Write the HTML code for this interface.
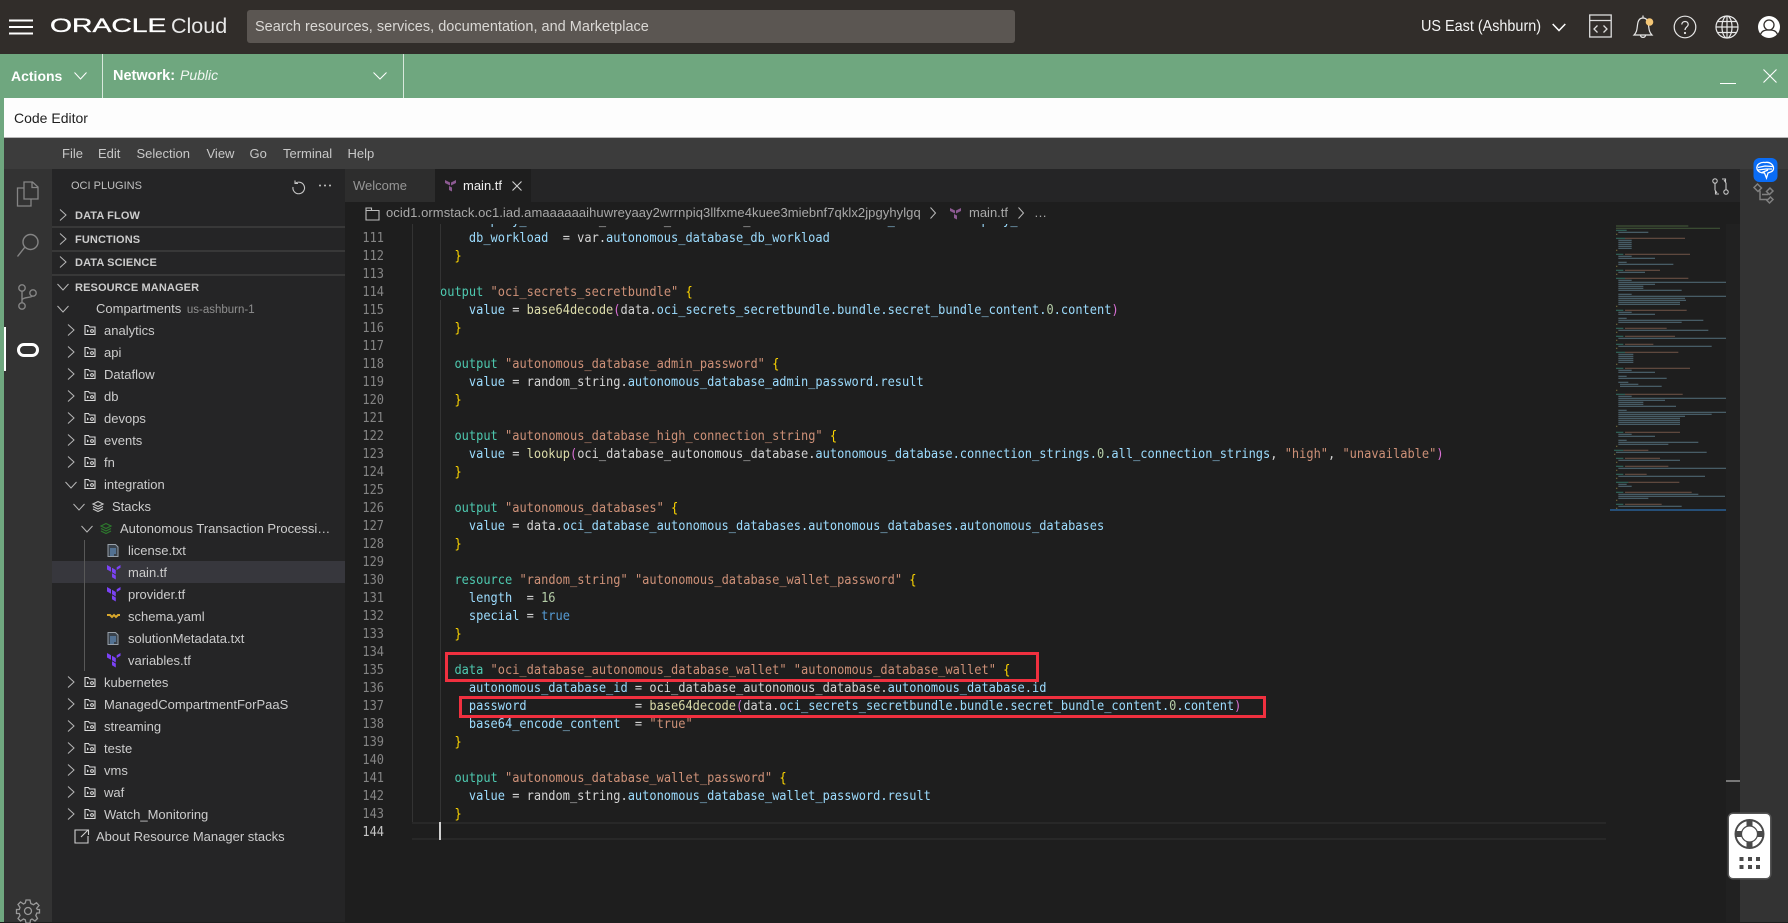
<!DOCTYPE html>
<html><head><meta charset="utf-8"><title>Code Editor</title>
<style>
*{box-sizing:border-box}
html,body{margin:0;padding:0;width:1788px;height:922px;overflow:hidden;background:#1e1e1e;font-family:"Liberation Sans",sans-serif}
.a{position:absolute;white-space:nowrap}
svg{position:absolute;overflow:visible}
.row{position:absolute;height:22px;line-height:22px;font-size:13px;color:#cccccc;white-space:nowrap;margin-top:1px}
.sec{position:absolute;left:75px;font-size:11px;font-weight:bold;color:#cccccc;line-height:14px;letter-spacing:.12px;margin-top:1px}
.sep{position:absolute;left:52px;width:293px;height:2px;background:#383838}
.mn{position:absolute;top:146px;font-size:13px;line-height:15px;color:#c8c8c8}
pre.a{margin:0;font-family:"DejaVu Sans Mono","Liberation Mono",monospace;font-size:13.5px;line-height:18px;white-space:pre}
.k{color:#4ec9b0}.s{color:#ce9178}.b{color:#ffd700}.p{color:#9cdcfe}.w{color:#d4d4d4}.f{color:#dcdcaa}.m{color:#da70d6}.n{color:#b5cea8}.t{color:#569cd6}
</style></head><body>
<svg width="0" height="0" style="position:absolute"><defs>
<g id="ch"><path d="M-3-5.5 3 0-3 5.5" fill="none" stroke="#b8b8b8" stroke-width="1"/></g>
<g id="cd"><path d="M-5.5-3 0 3 5.5-3" fill="none" stroke="#b8b8b8" stroke-width="1"/></g>
<g id="fo"><path d="M.5 1.5H4L5 3H10.5V10.5H.5Z" fill="none" stroke="#dcdcdc" stroke-width="1.1"/><path d="M2.5 5.5 4.5 7 2.5 8.5Z" fill="#dcdcdc"/><circle cx="7.5" cy="7" r="1.4" fill="none" stroke="#dcdcdc"/></g>
<g id="tf"><path d="M0 0 4 2.3V6.8L0 4.5ZM5 2.8 8.8 5V9.5L5 7.3ZM9.7 5 13.5 2.8V0L9.7 2.2V6.5ZM5 8.3 8.8 10.5V14.5L5 12.3Z" fill="#7b42f6"/></g>
<g id="tx"><path d="M1 .5H8.5L11 3V12.5H1Z" fill="#39424c" stroke="#98a0a8"/><path d="M3 5H9M3 7H9M3 9H9M3 11H7" stroke="#6aa0d8"/></g>
<g id="st"><path d="M0 3 5 .5 10 3 5 5.5ZM0 5.5 5 8 10 5.5M0 8 5 10.5 10 8" fill="none" stroke="currentColor" stroke-width="1.2"/></g>
</defs></svg>

<!-- top bar -->
<div class="a" style="left:0;top:0;width:1788px;height:54px;background:#312d2a"></div>
<svg style="left:9px;top:19px" width="24" height="16"><path d="M0 1.5H24M0 8H24M0 14.5H24" stroke="#fff" stroke-width="2"/></svg>
<div class="a" style="left:50px;top:16px;font-size:19px;line-height:22px;color:#fff;transform:scaleX(1.49);transform-origin:0 0;-webkit-text-stroke:.35px #fff">ORACLE</div>
<div class="a" style="left:171px;top:14px;font-size:21.5px;line-height:24px;color:#e8e8e8">Cloud</div>
<div class="a" style="left:247px;top:10px;width:768px;height:33px;background:#5b5652;border-radius:3px"></div>
<div class="a" style="left:255px;top:18px;font-size:14.5px;line-height:18px;color:#dad8d5;letter-spacing:.01px">Search resources, services, documentation, and Marketplace</div>
<div class="a" style="left:1421px;top:17px;font-size:16px;line-height:20px;color:#f4f4f4;transform:scaleX(.9);transform-origin:0 0">US East (Ashburn)</div>
<svg style="left:1552px;top:23px" width="14" height="9"><path d="M.7 1 7 7.5 13.3 1" fill="none" stroke="#fff" stroke-width="1.5"/></svg>
<svg style="left:1589px;top:14px" width="23" height="24" fill="none" stroke="#ddd" stroke-width="1.3"><rect x=".7" y="1" width="21.5" height="22"/><path d="M.7 6.5H22M8.5 11.5 5 15 8.5 18.500M14.500 11.500 18 15 14.500 18.500"/></svg>
<svg style="left:1632px;top:14px" width="24" height="25" fill="none" stroke="#e8e8e8" stroke-width="1.2"><path d="M2 21C5 18 5 15 5.500 11 6 6 8 4 11 4S16 6 16.500 11C17 15 17 18 20 21ZM11 4V1.500M8.500 21.500C9 24 13 24 13.500 21.500"/><circle cx="17.500" cy="8" r="3.800" fill="#f4c676" stroke="none"/></svg>
<svg style="left:1673px;top:15px" width="24" height="24" fill="none" stroke="#e8e8e8" stroke-width="1.2"><circle cx="12" cy="12" r="10.800"/><path d="M8.800 9.500C9 5.500 15.200 5.500 15.200 9.500 15.200 12 12 12 12 15"/><circle cx="12" cy="18" r=".5"/></svg>
<svg style="left:1715px;top:15px" width="24" height="24" fill="none" stroke="#e8e8e8" stroke-width="1.2"><circle cx="12" cy="12" r="11"/><ellipse cx="12" cy="12" rx="5" ry="11"/><path d="M12 1V23M1 12H23M2.500 6.500H21.500M2.500 17.500H21.500"/></svg>
<svg style="left:1757px;top:15px" width="24" height="24"><circle cx="12" cy="12" r="11" fill="#fff"/><circle cx="12" cy="10" r="5" fill="none" stroke="#312d2a" stroke-width="1.300"/><path d="M3.500 19.500C5 15.500 8 15 12 15S19 15.500 20.500 19.500" fill="none" stroke="#312d2a" stroke-width="1.300"/></svg>

<!-- green bar -->
<div class="a" style="left:0;top:54px;width:1788px;height:44px;background:#6fa77f"></div>
<div class="a" style="left:0;top:54px;width:3.500px;height:868px;background:#6fa77f"></div>
<div class="a" style="left:11px;top:67px;font-size:14px;line-height:18px;font-weight:bold;color:#fff">Actions</div>
<svg style="left:74px;top:72px" width="13" height="8"><path d="M.5.500 6.500 7 12.500.500" fill="none" stroke="#fff" stroke-width="1"/></svg>
<div class="a" style="left:102px;top:54px;width:1px;height:44px;background:#d8e8dc"></div>
<div class="a" style="left:113px;top:67px;font-size:14.500px;line-height:18px;font-weight:bold;color:#fff">Network:</div>
<div class="a" style="left:180px;top:66px;font-size:14px;line-height:18px;font-style:italic;color:#f0f6f1">Public</div>
<svg style="left:373px;top:72px" width="14" height="8"><path d="M.5.500 7 7 13.500.500" fill="none" stroke="#fff" stroke-width="1"/></svg>
<div class="a" style="left:403px;top:54px;width:1px;height:44px;background:#d8e8dc"></div>
<div class="a" style="left:1720px;top:83px;width:16px;height:1px;background:#fff"></div>
<svg style="left:1763px;top:69px" width="14" height="14"><path d="M.5.500 13.500 13.500M13.500.500 .5 13.500" stroke="#fff" stroke-width="1.100"/></svg>

<!-- white bar -->
<div class="a" style="left:3.500px;top:98px;width:1785px;height:40px;background:#fdfdfd;border-bottom:1px solid #b8b8b8"></div>
<div class="a" style="left:14px;top:109px;font-size:14px;line-height:18px;color:#1f1f1f">Code Editor</div>

<!-- menu -->
<div class="a" style="left:3.500px;top:138px;width:1785px;height:31px;background:#3c3c3c"></div>
<div class="mn" style="left:62px">File</div><div class="mn" style="left:98px">Edit</div><div class="mn" style="left:136.500px">Selection</div><div class="mn" style="left:206.500px">View</div><div class="mn" style="left:249.500px">Go</div><div class="mn" style="left:283px">Terminal</div><div class="mn" style="left:347.500px">Help</div>

<!-- activity bar -->
<div class="a" style="left:3.500px;top:169px;width:48.500px;height:753px;background:#333333"></div>
<svg style="left:16px;top:181px" width="24" height="27" fill="none" stroke="#858585" stroke-width="1.300"><path d="M8 1H16.500L22 6V18H8ZM16 1V6.500H22M8 7H1.500V25H15V18"/></svg>
<svg style="left:16px;top:233px" width="25" height="25" fill="none" stroke="#858585" stroke-width="1.400"><circle cx="14.500" cy="9" r="7.500"/><path d="M9 14 1.500 23.500"/></svg>
<svg style="left:17px;top:284px" width="21" height="26" fill="none" stroke="#858585" stroke-width="1.400"><circle cx="5" cy="4" r="3.200"/><circle cx="5" cy="22" r="3.200"/><circle cx="16" cy="9" r="3.200"/><path d="M5 7.500V18.500M5 16C6 13 14 14 15.500 12"/></svg>
<div class="a" style="left:3.500px;top:327px;width:2.500px;height:44px;background:#fff"></div>
<div class="a" style="left:17px;top:343px;width:22px;height:14px;border:3px solid #fff;border-radius:7px"></div>
<svg style="left:16px;top:899px" width="24" height="24" fill="none" stroke="#999" stroke-width="1.300"><circle cx="12" cy="12" r="3.500"/><path d="M10 1H14L14.800 4.500 17.500 5.700 20.500 3.700 23 6.500 20.600 9.300 21.400 10.500H23.500V14H20.800L19.800 16.500 21.500 19.500 19 22 16 20 14.500 21 14 24H10L9.300 20.800 7.500 20 4.500 22 2 19.500 4 16.500 3.300 14.500H.5V10.500H3.300L4 8.500 2 5.500 4.500 3 7.500 5 9.300 4Z"/></svg>

<!-- sidebar -->
<div class="a" style="left:52px;top:169px;width:293px;height:753px;background:#252526"></div>
<div class="a" style="left:71px;top:179px;font-size:11px;line-height:14px;color:#c0c0c0">OCI PLUGINS</div>
<svg style="left:292px;top:179px" width="13" height="14" fill="none" stroke="#c5c5c5" stroke-width="1.100"><path d="M3 1.500V4.500H6M3 4.500A5.800 5.800 0 1 1 1 8"/></svg>
<svg style="left:318px;top:184px" width="14" height="3" fill="#c5c5c5"><circle cx="2" cy="1.500" r="1"/><circle cx="7" cy="1.500" r="1"/><circle cx="12" cy="1.500" r="1"/></svg>

<div class="sep" style="top:226px"></div><div class="sep" style="top:250px"></div><div class="sep" style="top:274px"></div>
<div class="sec" style="top:208px">DATA FLOW</div>
<div class="sec" style="top:232px">FUNCTIONS</div>
<div class="sec" style="top:255px">DATA SCIENCE</div>
<div class="sec" style="top:280px">RESOURCE MANAGER</div>
<div class="a" style="left:52px;top:561px;width:293px;height:22px;background:#37373d"></div>
<div class="a" style="left:84px;top:540px;width:1px;height:131px;background:#585858"></div>

<svg style="left:0;top:0" width="346" height="922">
<use href="#ch" x="63" y="215"/><use href="#ch" x="63" y="239"/><use href="#ch" x="63" y="262"/><use href="#cd" x="63" y="287"/>
<use href="#cd" x="63" y="309"/>
<use href="#ch" x="71" y="330"/><use href="#ch" x="71" y="352"/><use href="#ch" x="71" y="374"/><use href="#ch" x="71" y="396"/><use href="#ch" x="71" y="418"/><use href="#ch" x="71" y="440"/><use href="#ch" x="71" y="462"/><use href="#cd" x="71" y="485"/>
<use href="#cd" x="79" y="507"/><use href="#cd" x="87" y="529"/>
<use href="#ch" x="71" y="682"/><use href="#ch" x="71" y="704"/><use href="#ch" x="71" y="726"/><use href="#ch" x="71" y="748"/><use href="#ch" x="71" y="770"/><use href="#ch" x="71" y="792"/><use href="#ch" x="71" y="814"/>
<use href="#fo" x="84.500" y="324"/><use href="#fo" x="84.500" y="346"/><use href="#fo" x="84.500" y="368"/><use href="#fo" x="84.500" y="390"/><use href="#fo" x="84.500" y="412"/><use href="#fo" x="84.500" y="434"/><use href="#fo" x="84.500" y="456"/><use href="#fo" x="84.500" y="478"/>
<use href="#fo" x="84.500" y="676"/><use href="#fo" x="84.500" y="698"/><use href="#fo" x="84.500" y="720"/><use href="#fo" x="84.500" y="742"/><use href="#fo" x="84.500" y="764"/><use href="#fo" x="84.500" y="786"/><use href="#fo" x="84.500" y="808"/>
<use href="#st" x="93" y="501" style="color:#c8c8c8"/><use href="#st" x="101" y="523" style="color:#2d7a2d"/>
<use href="#tx" x="107" y="544"/><use href="#tx" x="107" y="632"/>
<use href="#tf" x="107" y="565"/><use href="#tf" x="107" y="587"/><use href="#tf" x="107" y="653"/>
<path d="M107 615H110L112 617 114 615 116 617 118 615H120" fill="none" stroke="#d8a72c" stroke-width="2"/>
<path d="M88 830H75V843H88V836M81 837 88 830M83 830H88.500V835" fill="none" stroke="#d0d0d0" stroke-width="1.100"/>
</svg>

<div class="row" style="left:96px;top:297px">Compartments <span style="font-size:11.500px;color:#8f8f8f;margin-left:2px">us-ashburn-1</span></div>
<div class="row" style="left:104px;top:319px">analytics</div>
<div class="row" style="left:104px;top:341px">api</div>
<div class="row" style="left:104px;top:363px">Dataflow</div>
<div class="row" style="left:104px;top:385px">db</div>
<div class="row" style="left:104px;top:407px">devops</div>
<div class="row" style="left:104px;top:429px">events</div>
<div class="row" style="left:104px;top:451px">fn</div>
<div class="row" style="left:104px;top:473px">integration</div>
<div class="row" style="left:112px;top:495px">Stacks</div>
<div class="row" style="left:120px;top:517px">Autonomous Transaction Processi…</div>
<div class="row" style="left:128px;top:539px">license.txt</div>
<div class="row" style="left:128px;top:561px">main.tf</div>
<div class="row" style="left:128px;top:583px">provider.tf</div>
<div class="row" style="left:128px;top:605px">schema.yaml</div>
<div class="row" style="left:128px;top:627px">solutionMetadata.txt</div>
<div class="row" style="left:128px;top:649px">variables.tf</div>
<div class="row" style="left:104px;top:671px">kubernetes</div>
<div class="row" style="left:104px;top:693px">ManagedCompartmentForPaaS</div>
<div class="row" style="left:104px;top:715px">streaming</div>
<div class="row" style="left:104px;top:737px">teste</div>
<div class="row" style="left:104px;top:759px">vms</div>
<div class="row" style="left:104px;top:781px">waf</div>
<div class="row" style="left:104px;top:803px">Watch_Monitoring</div>
<div class="row" style="left:96px;top:825px">About Resource Manager stacks</div>

<!-- editor: code -->
<div class="a" style="left:345px;top:202px;width:1395px;height:720px;background:#1e1e1e"></div>
<div class="a" style="left:412px;top:822px;width:1194px;height:18px;border-top:2px solid #282828;border-bottom:2px solid #282828"></div>
<div class="a" style="left:411.500px;top:224px;width:1px;height:598px;background:#333"></div>
<div class="a" style="left:439.500px;top:224px;width:1px;height:66px;background:#333"></div>
<div class="a" style="left:439.500px;top:300px;width:1px;height:522px;background:#333"></div>
<div class="a" style="left:439px;top:822px;width:1.500px;height:18px;background:#d0d0d0"></div>

<div class="a" style="left:345px;top:224px;width:1265px;height:698px;overflow:hidden">
<pre class="a" style="left:0;top:-13px;width:39px;text-align:right;color:#858585;transform:scaleX(.8874);transform-origin:100% 0">110
111
112
113
114
115
116
117
118
119
120
121
122
123
124
125
126
127
128
129
130
131
132
133
134
135
136
137
138
139
140
141
142
143
<span style="color:#c6c6c6">144</span></pre>
<pre class="a" style="left:94.700px;top:-13px;transform:scaleX(.8882);transform-origin:0 0;color:#d4d4d4">    <span class="p">display_name</span> = <span class="w">oci_database_autonomous_database</span>.<span class="p">autonomous_database.display_name</span>
    <span class="p">db_workload</span>  = var.<span class="p">autonomous_database_db_workload</span>
  <span class="b">}</span>

<span class="k">output</span> <span class="s">"oci_secrets_secretbundle"</span> <span class="b">{</span>
    <span class="p">value</span> = <span class="f">base64decode</span><span class="m">(</span>data.<span class="p">oci_secrets_secretbundle.bundle.secret_bundle_content.</span><span class="n">0</span><span class="p">.content</span><span class="m">)</span>
  <span class="b">}</span>

  <span class="k">output</span> <span class="s">"autonomous_database_admin_password"</span> <span class="b">{</span>
    <span class="p">value</span> = random_string.<span class="p">autonomous_database_admin_password.result</span>
  <span class="b">}</span>

  <span class="k">output</span> <span class="s">"autonomous_database_high_connection_string"</span> <span class="b">{</span>
    <span class="p">value</span> = <span class="f">lookup</span><span class="m">(</span>oci_database_autonomous_database.<span class="p">autonomous_database.connection_strings.</span><span class="n">0</span><span class="p">.all_connection_strings</span>, <span class="s">"high"</span>, <span class="s">"unavailable"</span><span class="m">)</span>
  <span class="b">}</span>

  <span class="k">output</span> <span class="s">"autonomous_databases"</span> <span class="b">{</span>
    <span class="p">value</span> = data.<span class="p">oci_database_autonomous_databases.autonomous_databases.autonomous_databases</span>
  <span class="b">}</span>

  <span class="k">resource</span> <span class="s">"random_string"</span> <span class="s">"autonomous_database_wallet_password"</span> <span class="b">{</span>
    <span class="p">length</span>  = <span class="n">16</span>
    <span class="p">special</span> = <span class="t">true</span>
  <span class="b">}</span>

  <span class="k">data</span> <span class="s">"oci_database_autonomous_database_wallet"</span> <span class="s">"autonomous_database_wallet"</span> <span class="b">{</span>
    <span class="p">autonomous_database_id</span> = oci_database_autonomous_database.<span class="p">autonomous_database.id</span>
    <span class="p">password</span>               = <span class="f">base64decode</span><span class="m">(</span>data.<span class="p">oci_secrets_secretbundle.bundle.secret_bundle_content.</span><span class="n">0</span><span class="p">.content</span><span class="m">)</span>
    <span class="p">base64_encode_content</span>  = <span class="s">"true"</span>
  <span class="b">}</span>

  <span class="k">output</span> <span class="s">"autonomous_database_wallet_password"</span> <span class="b">{</span>
    <span class="p">value</span> = random_string.<span class="p">autonomous_database_wallet_password.result</span>
  <span class="b">}</span>
</pre>
</div>

<!-- red boxes -->
<div class="a" style="left:445px;top:652px;width:594px;height:30px;border:3px solid #f0303f"></div>
<div class="a" style="left:459px;top:696px;width:807px;height:22px;border:3px solid #f0303f"></div>

<!-- tabs -->
<div class="a" style="left:345px;top:169px;width:1395px;height:33px;background:#252526"></div>
<div class="a" style="left:345px;top:169px;width:90px;height:33px;background:#2d2d2d"></div>
<div class="a" style="left:353px;top:178px;font-size:13px;line-height:16px;color:#969696">Welcome</div>
<div class="a" style="left:435px;top:169px;width:96px;height:33px;background:#1e1e1e"></div>
<svg style="left:445px;top:180px" width="12" height="12"><path d="M0 0 5 2.500V5.500L0 3ZM6 2.500 11 0V3L6 5.500ZM4 6 7 7.500V11.500L4 10Z" fill="#8c5a92"/></svg>
<div class="a" style="left:463px;top:178px;font-size:13px;line-height:16px;color:#f0f0f0">main.tf</div>
<svg style="left:512px;top:181px" width="10" height="10"><path d="M.5.500 9.500 9.500M9.500.500 .5 9.500" stroke="#d0d0d0" stroke-width="1.100"/></svg>
<svg style="left:1712px;top:178px" width="17" height="17" fill="none" stroke="#c5c5c5" stroke-width="1.100"><circle cx="3" cy="3" r="2.200"/><circle cx="14" cy="14" r="2.200"/><path d="M3 5.200V12L5 15M14 11.800V5L12 2M10 1H13.500V4M7 16H3.500V13"/></svg>

<!-- breadcrumb -->
<div class="a" style="left:345px;top:202px;width:1395px;height:22px;background:#1e1e1e"></div>
<svg style="left:365px;top:207px" width="15" height="14" fill="none" stroke="#bdbdbd" stroke-width="1.100"><path d="M1 1H6.500V3.500H14V13H1ZM1 3.500H6.500"/></svg>
<div class="a" style="left:386px;top:205px;font-size:13px;line-height:16px;color:#a9a9a9;letter-spacing:.07px">ocid1.ormstack.oc1.iad.amaaaaaaihuwreyaay2wrrnpiq3llfxme4kuee3miebnf7qklx2jpgyhylgq</div>
<svg style="left:930px;top:207px" width="6" height="12"><path d="M.5.500 5.500 6 .5 11.500" fill="none" stroke="#bbb" stroke-width="1"/></svg>
<svg style="left:950px;top:208px" width="12" height="12"><path d="M0 0 5 2.500V5.500L0 3ZM6 2.500 11 0V3L6 5.500ZM4 6 7 7.500V11.500L4 10Z" fill="#8c5a92"/></svg>
<div class="a" style="left:969px;top:205px;font-size:13px;line-height:16px;color:#a9a9a9">main.tf</div>
<svg style="left:1018px;top:207px" width="6" height="12"><path d="M.5.500 5.500 6 .5 11.500" fill="none" stroke="#bbb" stroke-width="1"/></svg>
<div class="a" style="left:1034px;top:205px;font-size:13px;line-height:16px;color:#a9a9a9">…</div>

<!-- minimap -->
<div class="a" style="left:1726px;top:224px;width:14px;height:698px;background:#212121"></div>
<svg style="left:1600px;top:210px;filter:blur(.35px)" width="188" height="330" viewBox="0 0 564 990" fill="none" stroke-width="3.500" opacity=".42">
<path stroke="#6a9955" d="M48 48H265M48 55H360"/>
<path stroke="#ce9178" d="M75 85H255M75 133H270M75 181H180M75 205H265M75 301H260M75 355H200M75 379H225M75 403H160M75 427H235M75 475H270M75 553H248M75 667H240M70 721H145M75 745H180M75 769H205M75 793H140M85 817H238M75 847H275M75 883H185"/>
<path stroke="#4ec9b0" d="M48 61H80M48 85H75M48 133H70M48 181H70M48 205H75M48 301H70M48 355H70M48 379H70M48 403H70M48 427H75M48 475H70M48 553H75M48 667H70M42 721H70M48 745H70M48 769H70M48 793H70M48 817H85M48 847H70M48 883H70"/>
<path stroke="#8fc8e4" d="M55 67H145M55 91H95M55 97H95M55 103H95M55 109H95M55 115H95M55 139H95M55 145H165M55 157H80M55 163H220M55 187H135M55 211H95M55 217H378M55 223H165M55 229H130M55 235H130M55 241H245M55 253H95M55 259H378M55 265H255M55 271H258M55 277H240M55 283H240M55 307H95M55 313H165M55 325H80M55 331H310M55 337H245M55 361H325M55 385H378M55 409H335M55 433H100M55 439H100M55 445H100M55 451H100M55 457H100M55 481H95M55 487H165M55 499H80M55 505H200M55 517H85M60 523H115M60 529H185M55 559H95M55 565H378M55 571H195M55 577H130M55 583H130M55 589H228M55 601H80M55 607H378M55 613H335M55 619H255M55 625H240M55 631H240M55 637H240M55 643H240M55 673H95M55 679H165M55 691H80M55 697H295M55 703H205M48 727H320M55 751H240M55 775H378M55 799H315M55 823H80M55 829H95M55 853H295M55 859H375M55 865H145M55 889H245"/>
<path stroke="#e8d060" d="M48 73H52M48 121H52M48 169H52M48 193H52M48 289H52M48 343H52M48 367H52M48 391H52M48 415H52M48 463H52M48 541H52M48 649H52M48 709H52M42 733H46M48 757H52M48 781H52M48 805H52M48 835H52M48 871H52M48 895H52"/>
</svg>
<div class="a" style="left:1610px;top:509px;width:116px;height:2px;background:#264f78"></div>
<div class="a" style="left:1726px;top:779.500px;width:14px;height:2px;background:#777"></div>

<!-- right bar -->
<div class="a" style="left:1740px;top:169px;width:48px;height:753px;background:#333333"></div>
<svg style="left:1753px;top:158px" width="24" height="24"><rect width="24" height="24" rx="6" fill="#0a6cf5" x=".5"/><path d="M4 11C3 6 8 4 12 4.500 17 3.500 21 7 20.500 11 20 14 17 14 15 15L13.500 20 11.500 15C8 15 5 14 4 11ZM5 9.500 12 8 20 8.500M5 12 13 11 19 11M9 14.500 15 12" fill="none" stroke="#fff" stroke-width="1.300"/></svg>
<svg style="left:1753px;top:183px" width="24" height="22" fill="none" stroke="#808080" stroke-width="1.500"><path d="M4.500 1 1 4.500 5 8.500 8.500 5ZM17 5 13.500 8.500 16.500 11.500 20 8ZM17.500 14 14 17.500 16.500 20 20 16.500ZM7 7.500V16.500H15M9 11.500H15.500"/></svg>

<!-- help widget -->
<div class="a" style="left:1729px;top:814px;width:41px;height:64px;background:#fff;border-radius:4px;box-shadow:0 0 0 1.500px #555"></div>
<svg style="left:1728px;top:813px" width="43" height="65">
<circle cx="21.500" cy="21" r="15" fill="#4a4a4a"/>
<circle cx="21.500" cy="21" r="10.500" fill="none" stroke="#fff" stroke-width="5"/>
<path d="M21.500 7V13.500M21.500 28.500V35M7.500 21H14M29 21H35.500" stroke="#4a4a4a" stroke-width="6"/>
<circle cx="21.500" cy="21" r="8" fill="#fff" stroke="#4a4a4a" stroke-width="1.200"/>
<g fill="#4a4a4a"><rect x="11.500" y="44" width="4" height="4"/><rect x="20" y="44" width="4" height="4"/><rect x="28" y="44" width="4" height="4"/><rect x="11.500" y="52" width="4" height="4"/><rect x="20" y="52" width="4" height="4"/><rect x="28" y="52" width="4" height="4"/></g>
</svg>
</body></html>
